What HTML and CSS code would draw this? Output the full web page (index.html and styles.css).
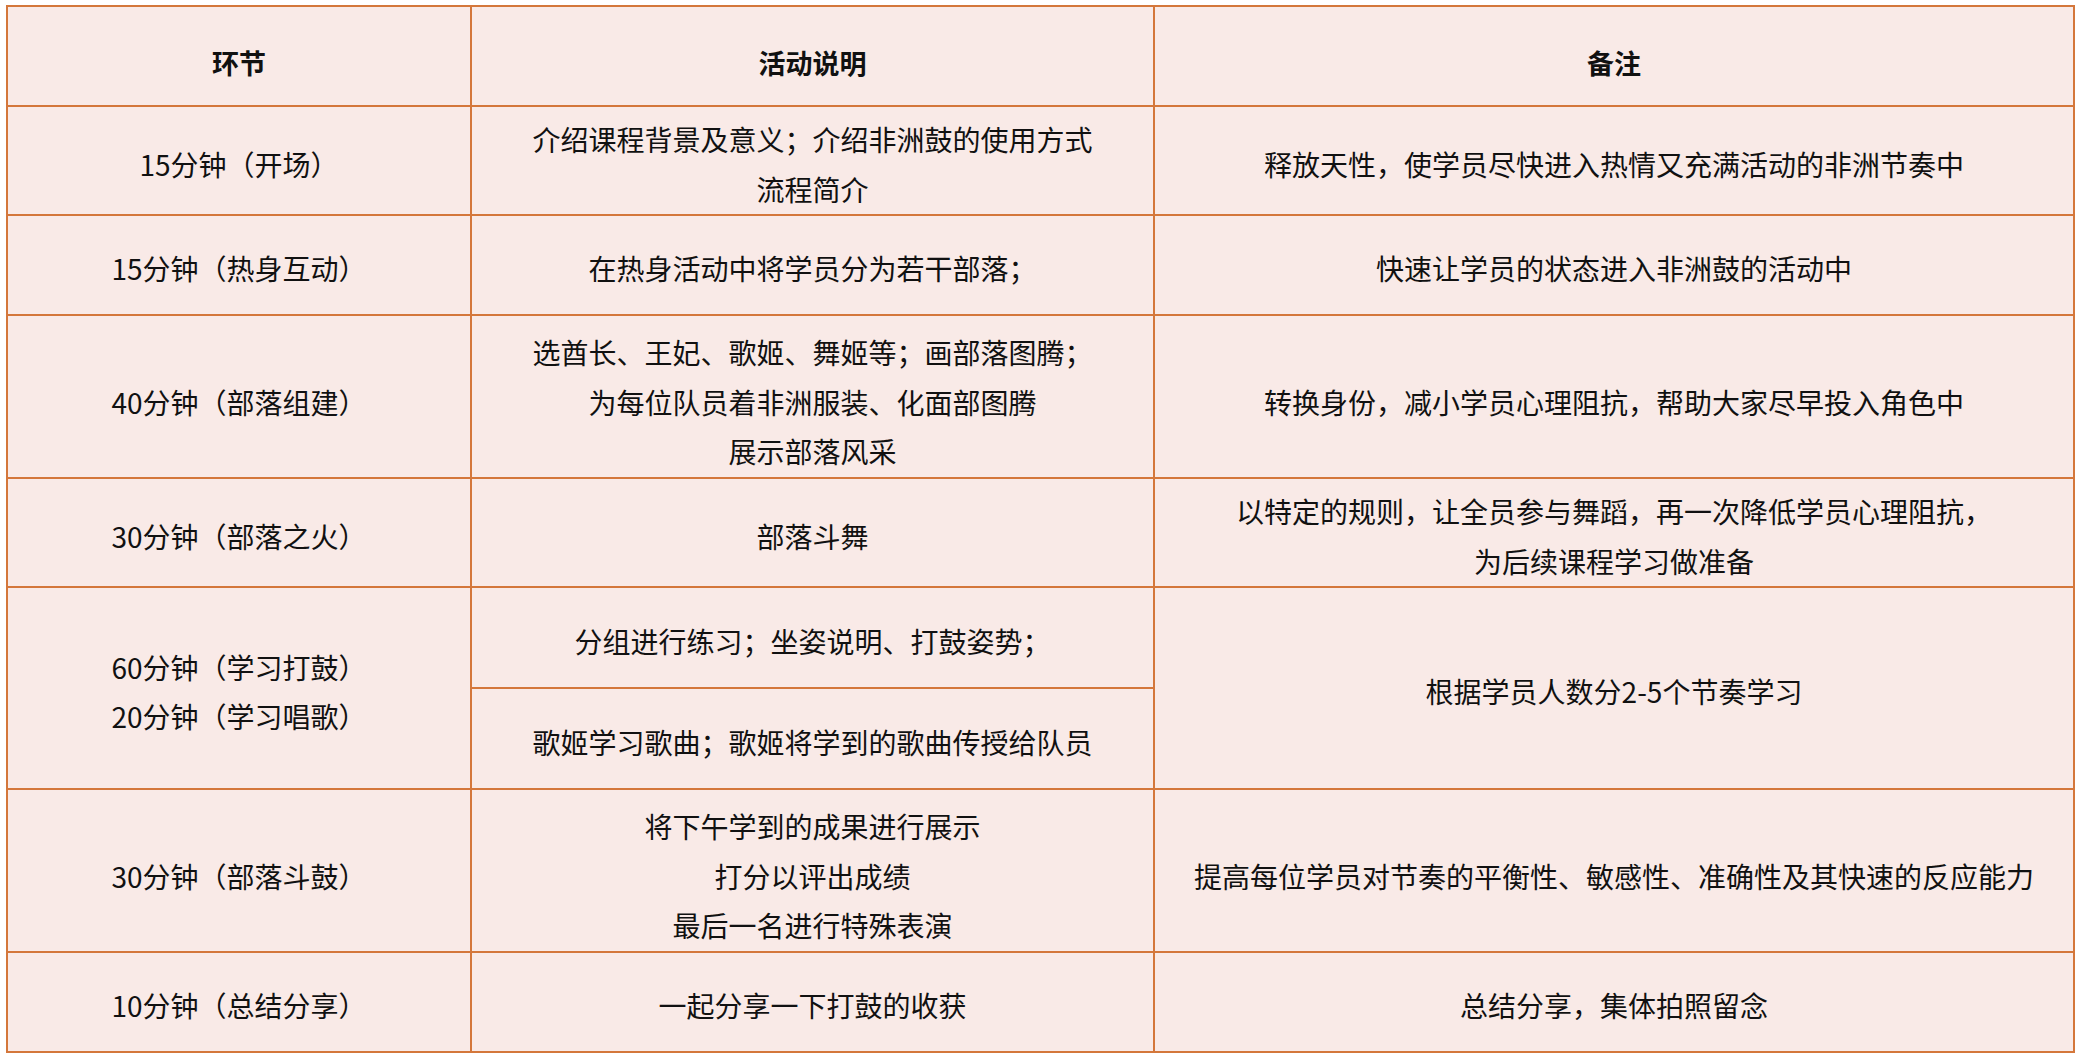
FILE: index.html
```html
<!DOCTYPE html>
<html lang="zh-CN">
<head>
<meta charset="utf-8">
<title>非洲鼓课程流程</title>
<link rel="stylesheet" href="styles.css">
</head>
<body>
<table class="plan">
  <colgroup>
    <col class="c1">
    <col class="c2">
    <col class="c3">
  </colgroup>
  <thead>
    <tr class="h100">
      <th>环节</th>
      <th>活动说明</th>
      <th>备注</th>
    </tr>
  </thead>
  <tbody>
    <tr class="h109">
      <td>15分钟（开场）</td>
      <td>介绍课程背景及意义；介绍非洲鼓的使用方式<br>流程简介</td>
      <td>释放天性，使学员尽快进入热情又充满活动的非洲节奏中</td>
    </tr>
    <tr class="h100">
      <td>15分钟（热身互动）</td>
      <td>在热身活动中将学员分为若干部落；</td>
      <td>快速让学员的状态进入非洲鼓的活动中</td>
    </tr>
    <tr class="h163">
      <td>40分钟（部落组建）</td>
      <td>选酋长、王妃、歌姬、舞姬等；画部落图腾；<br>为每位队员着非洲服装、化面部图腾<br>展示部落风采</td>
      <td>转换身份，减小学员心理阻抗，帮助大家尽早投入角色中</td>
    </tr>
    <tr class="h109">
      <td>30分钟（部落之火）</td>
      <td>部落斗舞</td>
      <td>以特定的规则，让全员参与舞蹈，再一次降低学员心理阻抗，<br>为后续课程学习做准备</td>
    </tr>
    <tr class="h101">
      <td rowspan="2">60分钟（学习打鼓）<br>20分钟（学习唱歌）</td>
      <td>分组进行练习；坐姿说明、打鼓姿势；</td>
      <td rowspan="2">根据学员人数分2-5个节奏学习</td>
    </tr>
    <tr class="h101">
      <td>歌姬学习歌曲；歌姬将学到的歌曲传授给队员</td>
    </tr>
    <tr class="h163">
      <td>30分钟（部落斗鼓）</td>
      <td>将下午学到的成果进行展示<br>打分以评出成绩<br>最后一名进行特殊表演</td>
      <td>提高每位学员对节奏的平衡性、敏感性、准确性及其快速的反应能力</td>
    </tr>
    <tr class="h100">
      <td>10分钟（总结分享）</td>
      <td>一起分享一下打鼓的收获</td>
      <td>总结分享，集体拍照留念</td>
    </tr>
  </tbody>
</table>
</body>
</html>
```

FILE: styles.css
```css
html, body {
  margin: 0;
  padding: 0;
  background: #ffffff;
}

body {
  font-family: "Noto Sans CJK SC", "Noto Sans", sans-serif;
  color: #111111;
}

.plan {
  margin: 5px 0 0 6px;
  width: 2067px;
  border-collapse: collapse;
  table-layout: fixed;
  background: #f9eae7;
  font-size: 28px;
  line-height: 49.5px;
}

.c1 { width: 464px; }
.c2 { width: 683px; }
.c3 { width: 920px; }

.plan th,
.plan td {
  border: 2px solid #d4773b;
  text-align: center;
  vertical-align: middle;
  padding: 8px 6px 0;
}

.plan th {
  font-weight: 700;
  font-size: 27px;
  padding-top: 14px;
}

.h100 { height: 100px; }
.h101 { height: 101px; }
.h109 { height: 109px; }
.h163 { height: 163px; }

.h163 td {
  padding-top: 12px;
}
```
